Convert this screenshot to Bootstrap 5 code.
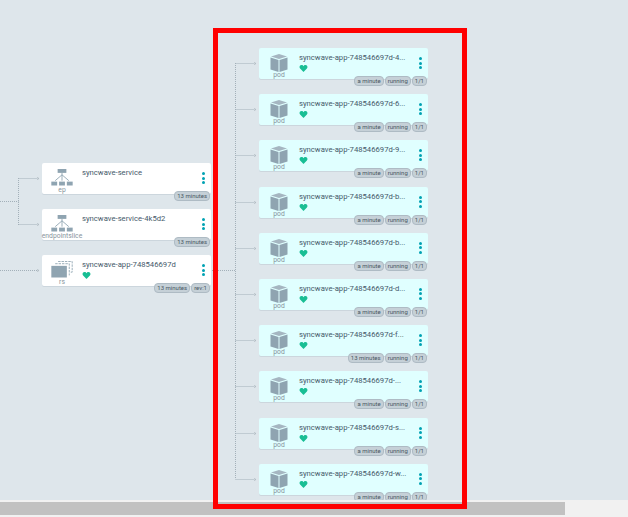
<!DOCTYPE html>
<html lang="en">
<head>
    <meta charset="UTF-8">
    <meta name="viewport" content="width=device-width, initial-scale=1.0">
    <title>syncwave resource tree</title>
    <link href="https://cdn.jsdelivr.net/npm/bootstrap@5.3.0/dist/css/bootstrap.min.css" rel="stylesheet">
    <style>
        html, body { height: 100%; overflow: hidden; }
        body { background: #dee6eb; font-family: Roboto, "Liberation Sans", sans-serif; color: #495763; }
        .tree-canvas { height: 500px; overflow: hidden; }
        .edges { left: 0; top: 0; }
        .edges line { stroke: #a3b0b9; stroke-width: 1; stroke-dasharray: 1 1; }
        .edges path { fill: none; stroke: #aab5bd; stroke-width: .8; }
        .col-left { width: 169px; margin-left: 42px; padding-top: 163px; gap: 15px; }
        .col-pods { width: 169px; margin-left: 48px; padding-top: 48px; gap: 15.2px; }
        .res-node { height: 31px; background: #fff; border-radius: 2px; box-shadow: 0 1px 0 #ccd6dd; }
        .res-node.is-pod { background: #e0ffff; }
        .kind-box { width: 40px; }
        .kind-box svg { display: block; margin-top: 6px; }
        .kind-label { font-size: 6.8px; line-height: 8px; margin-top: .5px; color: #87939c; white-space: nowrap; }
        .is-pod .kind-label { margin-top: -1px; }
        .node-name { font-size: 7.7px; line-height: 10px; margin-top: 5px; white-space: nowrap; color: #45596a; }
        .heart { display: block; margin-top: 2px; }
        .kebab { right: 6px; top: 9px; gap: 1.5px; }
        .kebab span { width: 3px; height: 3px; background: #00a2b3; border-radius: 50%; }
        .tags { right: 1px; top: 28px; gap: 1px; }
        .tag-pill { height: 10px; padding: 0 2px; font-size: 6px; line-height: 8px; color: #495763; background: #c5d0d7; border: 1px solid #aebbc4; border-radius: 4px; white-space: nowrap; }
        .fake-scroll { height: 17px; background: #f1f1f1; padding: 2px 0; }
        .fake-thumb { width: 565px; height: 13px; background: #c1c1c1; }
        .red-frame { left: 213px; top: 28px; width: 254px; height: 481px; border: 5px solid #ff0000; pointer-events: none; }
    </style>
</head>
<body>
    <div class="tree-canvas position-relative d-flex">
        <svg class="edges position-absolute" width="628" height="500">
            <!-- left column edges -->
            <line x1="0" y1="201.5" x2="18.5" y2="201.5"/>
            <line x1="18.5" y1="178" x2="18.5" y2="225"/>
            <line x1="18.5" y1="178.5" x2="37" y2="178.5"/>
            <line x1="18.5" y1="224.5" x2="37" y2="224.5"/>
            <line x1="0" y1="270.5" x2="37" y2="270.5"/>
            <path d="M37 177.5l2 1-2 1M37 223.5l2 1-2 1M37 269.5l2 1-2 1"/>
            <!-- rs to pods -->
            <line x1="212" y1="270.5" x2="235.5" y2="270.5"/>
            <line x1="235.5" y1="63" x2="235.5" y2="479"/>
            <g id="podEdges"></g>
        </svg>

        <div class="col-left d-flex flex-column flex-shrink-0" id="leftCol"></div>
        <div class="col-pods d-flex flex-column flex-shrink-0" id="podCol"></div>
    </div>
    <div class="fake-scroll"><div class="fake-thumb"></div></div>
    <div class="red-frame position-absolute"></div>

    <script src="https://cdn.jsdelivr.net/npm/bootstrap@5.3.0/dist/js/bootstrap.bundle.min.js"></script>
    <script>
        var icons = {
            net: '<svg width="22" height="17" viewBox="0 0 22 17" fill="#8fa4b1"><rect x="6.500" y="0" width="9" height="4"/><rect x="0" y="13" width="6" height="4"/><rect x="8" y="13" width="6" height="4"/><rect x="16" y="13" width="6" height="4"/><path d="M11 4v8M11 6L4 12M11 6l7 6" stroke="#8fa4b1" fill="none" stroke-width=".9"/></svg>',
            rs: '<svg width="22" height="17" viewBox="0 0 22 17" fill="#8fa4b1"><path d="M7 .5h14.500v11H20" fill="none" stroke="#8fa4b1" stroke-width=".9" stroke-dasharray="2.500 1"/><path d="M4 2.800h14.500v12" fill="none" stroke="#8fa4b1" stroke-width=".9" stroke-dasharray="2.500 1"/><rect x="0" y="5" width="16" height="12"/></svg>',
            pod: '<svg width="18" height="18" viewBox="0 0 18 18"><path d="M9 0l8 2.500L9 5 1 2.500z" fill="#a5b6c1"/><path d="M.5 3.500l8 2.500v12l-8-2.500z" fill="#8fa4b1"/><path d="M17.500 3.500L9.500 6v12l8-2.500z" fill="#8fa4b1"/></svg>'
        };
        var heart = '<svg class="heart" width="9" height="7" viewBox="0 0 9 8"><path d="M4.500 8L.6 4C-.8 2.300.3 0 2.300 0c1 0 1.800.5 2.200 1.300C4.900.5 5.700 0 6.700 0c2 0 3.100 2.300 1.700 4z" fill="#18be94"/></svg>';

        function nodeHtml(n) {
            var tags = n.tags.map(function (t) { return '<span class="tag-pill">' + t + '</span>'; }).join('');
            return '<div class="res-node position-relative d-flex' + (n.pod ? ' is-pod' : '') + '">' +
                '<div class="kind-box d-flex flex-column align-items-center flex-shrink-0">' + icons[n.icon] +
                '<div class="kind-label">' + n.kind + '</div></div>' +
                '<div><div class="node-name">' + n.name + '</div>' + (n.healthy ? heart : '') + '</div>' +
                '<div class="kebab position-absolute d-flex flex-column"><span></span><span></span><span></span></div>' +
                '<div class="tags position-absolute d-flex">' + tags + '</div></div>';
        }

        var left = [
            { kind: 'ep', icon: 'net', name: 'syncwave-service', tags: ['13 minutes'] },
            { kind: 'endpointslice', icon: 'net', name: 'syncwave-service-4k5d2', tags: ['13 minutes'] },
            { kind: 'rs', icon: 'rs', name: 'syncwave-app-748546697d', healthy: true, tags: ['13 minutes', 'rev:1'] }
        ];
        document.getElementById('leftCol').innerHTML = left.map(nodeHtml).join('');

        var suffix = ['4', '6', '9', 'b', 'b', 'd', 'f', '', 's', 'w'];
        document.getElementById('podCol').innerHTML = suffix.map(function (s, i) {
            return nodeHtml({
                kind: 'pod', icon: 'pod', pod: true, healthy: true,
                name: 'syncwave-app-748546697d-' + s + '...',
                tags: [i === 6 ? '13 minutes' : 'a minute', 'running', '1/1']
            });
        }).join('');

        var edges = '';
        suffix.forEach(function (s, i) {
            var y = Math.round(63 + i * 46.2) + .5;
            edges += '<line x1="235.500" y1="' + y + '" x2="254" y2="' + y + '"/>' +
                '<path d="M254 ' + (y - 1) + 'l2 1-2 1"/>';
        });
        document.getElementById('podEdges').innerHTML = edges;
    </script>
</body>
</html>
